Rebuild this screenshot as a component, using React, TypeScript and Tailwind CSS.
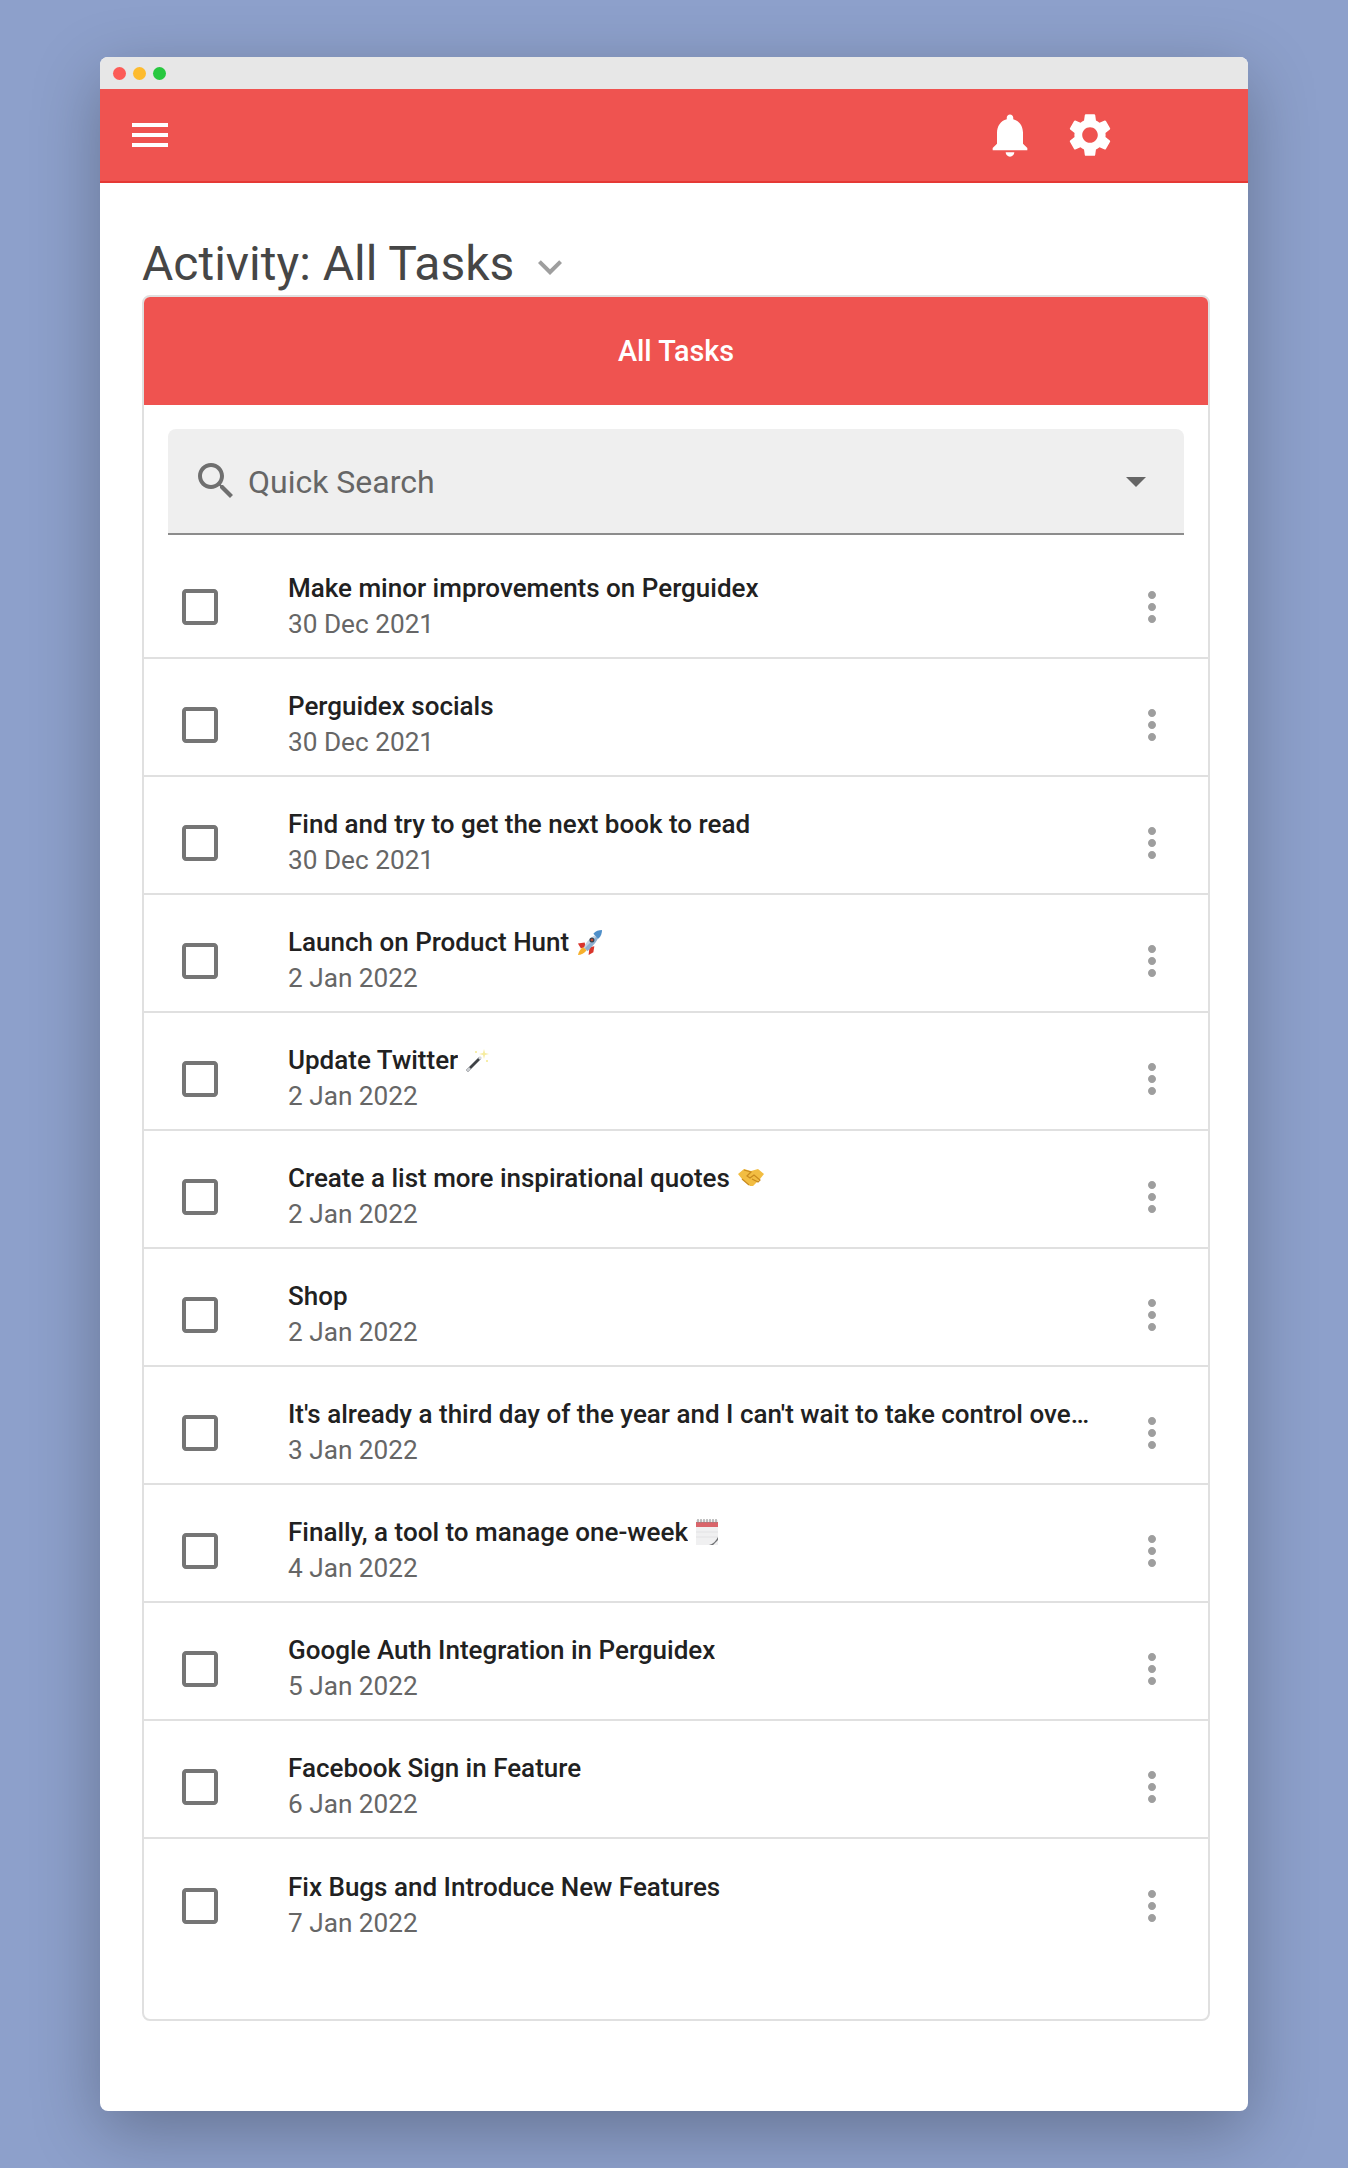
const TASKS = [
  { title: "Make minor improvements on Perguidex", date: "30 Dec 2021" },
  { title: "Perguidex socials", date: "30 Dec 2021" },
  { title: "Find and try to get the next book to read", date: "30 Dec 2021" },
  { title: "Launch on Product Hunt", date: "2 Jan 2022", emoji: "rocket" },
  { title: "Update Twitter", date: "2 Jan 2022", emoji: "wand" },
  { title: "Create a list more inspirational quotes", date: "2 Jan 2022", emoji: "handshake" },
  { title: "Shop", date: "2 Jan 2022" },
  { title: "It's already a third day of the year and I can't wait to take control over my whole week", date: "3 Jan 2022" },
  { title: "Finally, a tool to manage one-week", date: "4 Jan 2022", emoji: "calendar" },
  { title: "Google Auth Integration in Perguidex", date: "5 Jan 2022" },
  { title: "Facebook Sign in Feature", date: "6 Jan 2022" },
  { title: "Fix Bugs and Introduce New Features", date: "7 Jan 2022" },
];

function Icon({ d, className }: { d: string; className: string }) {
  return (
    <svg viewBox="0 0 24 24" fill="currentColor" className={className}>
      <path d={d} />
    </svg>
  );
}

const MENU = "M3 18h18v-2H3v2zm0-5h18v-2H3v2zm0-7v2h18V6H3z";
const BELL = "M12 22c1.1 0 2-.9 2-2h-4c0 1.1.89 2 2 2zm6-6v-5c0-3.07-1.64-5.64-4.5-6.32V4c0-.83-.67-1.5-1.5-1.5s-1.5.67-1.5 1.5v.68C7.63 5.36 6 7.92 6 11v5l-2 2v1h16v-1l-2-2z";
const GEAR = "M19.14 12.94c.04-.3.06-.61.06-.94 0-.32-.02-.64-.07-.94l2.03-1.58c.18-.14.23-.41.12-.61l-1.92-3.32c-.12-.22-.37-.29-.59-.22l-2.39.96c-.5-.38-1.03-.7-1.62-.94l-.36-2.54c-.04-.24-.24-.41-.48-.41h-3.84c-.24 0-.43.17-.47.41l-.36 2.54c-.59.24-1.13.57-1.62.94l-2.39-.96c-.22-.08-.47 0-.59.22L2.74 8.87c-.12.21-.08.47.12.61l2.03 1.58c-.05.3-.09.63-.09.94s.02.64.07.94l-2.03 1.58c-.18.14-.23.41-.12.61l1.92 3.32c.12.22.37.29.59.22l2.39-.96c.5.38 1.03.7 1.62.94l.36 2.54c.05.24.24.41.48.41h3.84c.24 0 .44-.17.47-.41l.36-2.54c.59-.24 1.13-.56 1.62-.94l2.39.96c.22.08.47 0 .59-.22l1.92-3.32c.12-.22.07-.47-.12-.61l-2.01-1.58zM12 15.6c-1.98 0-3.6-1.62-3.6-3.6s1.62-3.6 3.6-3.6 3.6 1.62 3.6 3.6-1.62 3.6-3.6 3.6z";
const SEARCH = "M15.5 14h-.79l-.28-.27C15.41 12.59 16 11.11 16 9.5 16 5.91 13.09 3 9.5 3S3 5.91 3 9.5 5.91 16 9.5 16c1.61 0 3.09-.59 4.23-1.57l.27.28v.79l5 4.99L20.49 19l-4.99-5zm-6 0C7.01 14 5 11.99 5 9.5S7.01 5 9.5 5 14 7.01 14 9.5 11.99 14 9.5 14z";
const CHECKBOX = "M19 5v14H5V5h14m0-2H5c-1.1 0-2 .9-2 2v14c0 1.1.9 2 2 2h14c1.1 0 2-.9 2-2V5c0-1.1-.9-2-2-2z";
const MORE = "M12 8c1.1 0 2-.9 2-2s-.9-2-2-2-2 .9-2 2 .9 2 2 2zm0 2c-1.1 0-2 .9-2 2s.9 2 2 2 2-.9 2-2-.9-2-2-2zm0 6c-1.1 0-2 .9-2 2s.9 2 2 2 2-.9 2-2-.9-2-2-2z";
const CHEVRON = "M7.41 8.59 12 13.17l4.59-4.58L18 10l-6 6-6-6 1.41-1.41z";
const DROP = "M7 10l5 5 5-5z";

function Emoji({ name }: { name: string }) {
  if (name === "rocket") {
    return (
      <svg viewBox="0 0 28 28" className="w-[27px] h-[27px] ml-[7px] shrink-0">
        <path d="M9 14 2 15l3 5 5-1z" fill="#d9342b" />
        <path d="M14 19l-1 8 5-3 1-6z" fill="#d9342b" />
        <path d="M8 19c-3 1-5 4-6 8 3 0 7-2 9-5z" fill="#f6b02c" />
        <path d="M8 20c2-7 9-13 17-16-4 7-11 14-17 16z" fill="#c4d4e4" />
        <path d="M9 20 25 4c-1 7-8 14-13 19z" fill="#8fb0d0" />
        <path d="M27 1c-3 0-7 1-9 4l5 5c3-2 4-6 4-9z" fill="#4f8fc9" />
        <circle cx="16.500" cy="11.500" r="2.600" fill="#38424c" />
        <circle cx="16.500" cy="11.500" r="1.300" fill="#c9452f" />
      </svg>
    );
  }
  if (name === "wand") {
    return (
      <svg viewBox="0 0 25 25" className="w-[25px] h-[25px] ml-[7px] shrink-0">
        <path d="M1 22 14 9l2 2L3 24z" fill="#3f4246" />
        <path d="M1 22l3-3 2 2-3 3z" fill="#c9ccd0" />
        <path d="M13 10l2-2 2 2-2 2z" fill="#d8dadd" />
        <path d="M19 1l1 4 4 1-4 1-1 4-1-4-4-1 4-1z" fill="#f6ec9f" />
        <circle cx="11" cy="4" r="1" fill="#f4e88c" />
        <circle cx="22" cy="13" r="1" fill="#f4e88c" />
      </svg>
    );
  }
  if (name === "handshake") {
    return (
      <svg viewBox="0 0 26 18" className="w-[26px] h-[18px] ml-[8px] shrink-0">
        <path d="M0 5l6-5 7 2 7-2 6 5-4 5-7 7h-3L4 10z" fill="#f2bd42" />
        <path d="M6 1l7 2-4 4 3 2 4-3 6 5-2 2-6-3M4 10l7 6" fill="none" stroke="#c98a1e" strokeWidth="1.200" />
      </svg>
    );
  }
  return (
    <svg viewBox="0 0 24 26" className="w-[24px] h-[26px] ml-[7px] shrink-0">
      <path d="M1 1h22v25H1z" fill="#f0f0f1" />
      <path d="M1 3h22v5H1z" fill="#d9646a" />
      <path d="M3 0v4M6 0v4M9 0v4M12 0v4M15 0v4M18 0v4M21 0v4" stroke="#888" strokeWidth="1" />
      <path d="M1 13h22M1 18h22" stroke="#e2e2e4" strokeWidth="1" />
      <path d="M14 26c4-1 7-4 9-8v3l-5 5z" fill="#6e7073" />
    </svg>
  );
}

function TaskRow({ title, date, emoji }: { title: string; date: string; emoji?: string }) {
  return (
    <div className="h-[118px] flex items-center border-b-2 border-[#e0e0e0] last:border-b-0 pt-[16px] pl-[32px] pr-[32px]">
      <Icon d={CHECKBOX} className="w-[48px] h-[48px] text-[#757575] shrink-0" />
      <div className="ml-[64px] mb-[2px] flex-1 min-w-0">
        <div className="flex items-center h-[36px]">
          <span className="truncate text-[26px] leading-[36px] font-medium text-[#212121]">{title}</span>
          {emoji && <Emoji name={emoji} />}
        </div>
        <div className="text-[26.2px] leading-[36px] text-[#666666]">{date}</div>
      </div>
      <Icon d={MORE} className="w-[48px] h-[48px] text-[#9e9e9e] shrink-0 ml-[36px]" />
    </div>
  );
}

export default function App() {
  return (
    <div className="min-h-[2168px] bg-[#8da0cb] pt-[57px] font-['Roboto',sans-serif]">
      <div className="mx-[100px] w-[1148px] h-[2054px] bg-white rounded-[8px] overflow-hidden shadow-[0_20px_68px_rgba(0,0,0,0.28)]">
        {/* Title bar */}
        <div className="h-[32px] bg-[#e7e7e7] flex items-center gap-[7px] pl-[13px]">
          <span className="w-[13px] h-[13px] rounded-full bg-[#fc5b57]" />
          <span className="w-[13px] h-[13px] rounded-full bg-[#fdbb2e]" />
          <span className="w-[13px] h-[13px] rounded-full bg-[#27c83f]" />
        </div>

        {/* App header */}
        <div className="relative h-[94px] bg-[#ef5350] border-b-2 border-[#e53935] flex items-center pl-[26px]">
          <Icon d={MENU} className="w-[48px] h-[48px] text-white" />
          <div className="ml-auto mr-[132px] flex items-center gap-[28px]">
            <Icon d={BELL} className="w-[52px] h-[52px] text-white" />
            <Icon d={GEAR} className="w-[52px] h-[52px] text-white" />
          </div>
        </div>

        <div className="pl-[42px] pr-[38px]">
          <div className="h-[112px] flex items-end">
            <h1 className="text-[48px] leading-[64px] font-normal text-[#464646] -mb-[1px]">Activity: All Tasks</h1>
            <Icon d={CHEVRON} className="w-[48px] h-[48px] text-[#9e9e9e] ml-[12px] mb-[4px]" />
          </div>

          <div className="h-[1726px] border-2 border-[#e0e0e0] rounded-[8px] overflow-hidden">
            <div className="h-[108px] pt-[2px] bg-[#ef5350] flex items-center justify-center text-[28.8px] font-medium text-white">
              All Tasks
            </div>

            <div className="px-[24px] pt-[24px]">
              <div className="h-[106px] bg-[#efefef] rounded-t-[8px] border-b-2 border-[#8c8c8c] flex items-center pl-[24px] pr-[24px]">
                <Icon d={SEARCH} className="w-[48px] h-[48px] text-[#6f6f6f] shrink-0" />
                <span className="ml-[8px] mt-[1px] text-[32px] text-[#666666]">Quick Search</span>
                <Icon d={DROP} className="w-[48px] h-[48px] text-[#666666] ml-auto" />
              </div>
            </div>

            <div className="mt-[6px]">
              {TASKS.map((task) => (
                <TaskRow key={task.title} {...task} />
              ))}
            </div>
          </div>
        </div>
      </div>
    </div>
  );
}
